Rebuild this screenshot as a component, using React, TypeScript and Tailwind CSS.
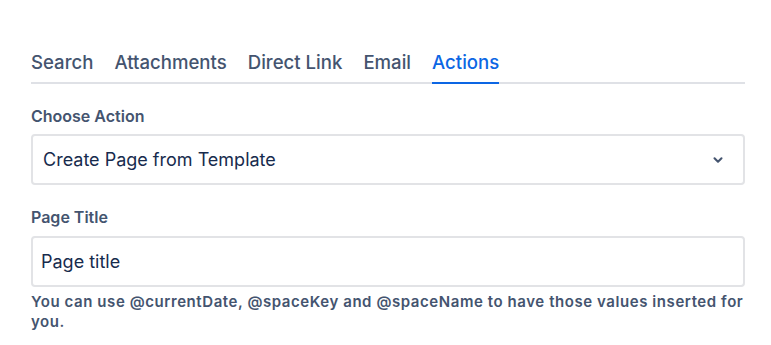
import React from 'react';

const tabs = ['Search', 'Attachments', 'Direct Link', 'Email', 'Actions'];

export default function App() {
  const active = 'Actions';
  return (
    <div className="w-[771px] h-[345px] bg-white pl-[31px] pt-[49px]" style={{ fontFamily: 'Inter, "Noto Sans", sans-serif' }}>
      <div className="w-[714px]">
        {/* tabs */}
        <div className="flex gap-[21px] border-b-2 border-[#dfe1e6]">
          {tabs.map((t) => (
            <div
              key={t}
              className={
                t === active
                  ? 'relative pb-[7px] text-[18.6px] leading-[26px] font-medium text-[#0c66e4]'
                  : 'relative pb-[7px] text-[18.6px] leading-[26px] font-medium text-[#44546f]'
              }
            >
              {t}
              {t === active && <div className="absolute left-0 right-0 -bottom-[2px] h-[2px] bg-[#0c66e4]" />}
            </div>
          ))}
        </div>

        {/* choose action */}
        <div className="mt-[22px] text-[16px] leading-[20px] font-semibold text-[#44546f]">Choose Action</div>
        <div className="mt-[8px] h-[51px] flex items-center justify-between border-2 border-[#e2e3e6] rounded-[4px] pl-[10px] pr-[18px]">
          <span className="text-[18px] text-[#172b4d]">Create Page from Template</span>
          <svg width="14" height="14" viewBox="0 0 24 24" fill="none" stroke="#44546f" strokeWidth="3.5" strokeLinecap="round" strokeLinejoin="round">
            <path d="M6 9l6 6 6-6" />
          </svg>
        </div>

        {/* page title */}
        <div className="mt-[22px] text-[16px] leading-[20px] font-semibold text-[#44546f]">Page Title</div>
        <div className="mt-[9px] h-[51px] flex items-center border-2 border-[#e2e3e6] rounded-[4px] pl-[8px]">
          <span className="text-[18px] text-[#172b4d]">Page title</span>
        </div>
        <div className="mt-[5px] w-[730px] text-[15px] leading-[20px] tracking-[0.038em] font-semibold text-[#44546f]">
          You can use @currentDate, @spaceKey and @spaceName to have those values inserted for you.
        </div>
      </div>
    </div>
  );
}
